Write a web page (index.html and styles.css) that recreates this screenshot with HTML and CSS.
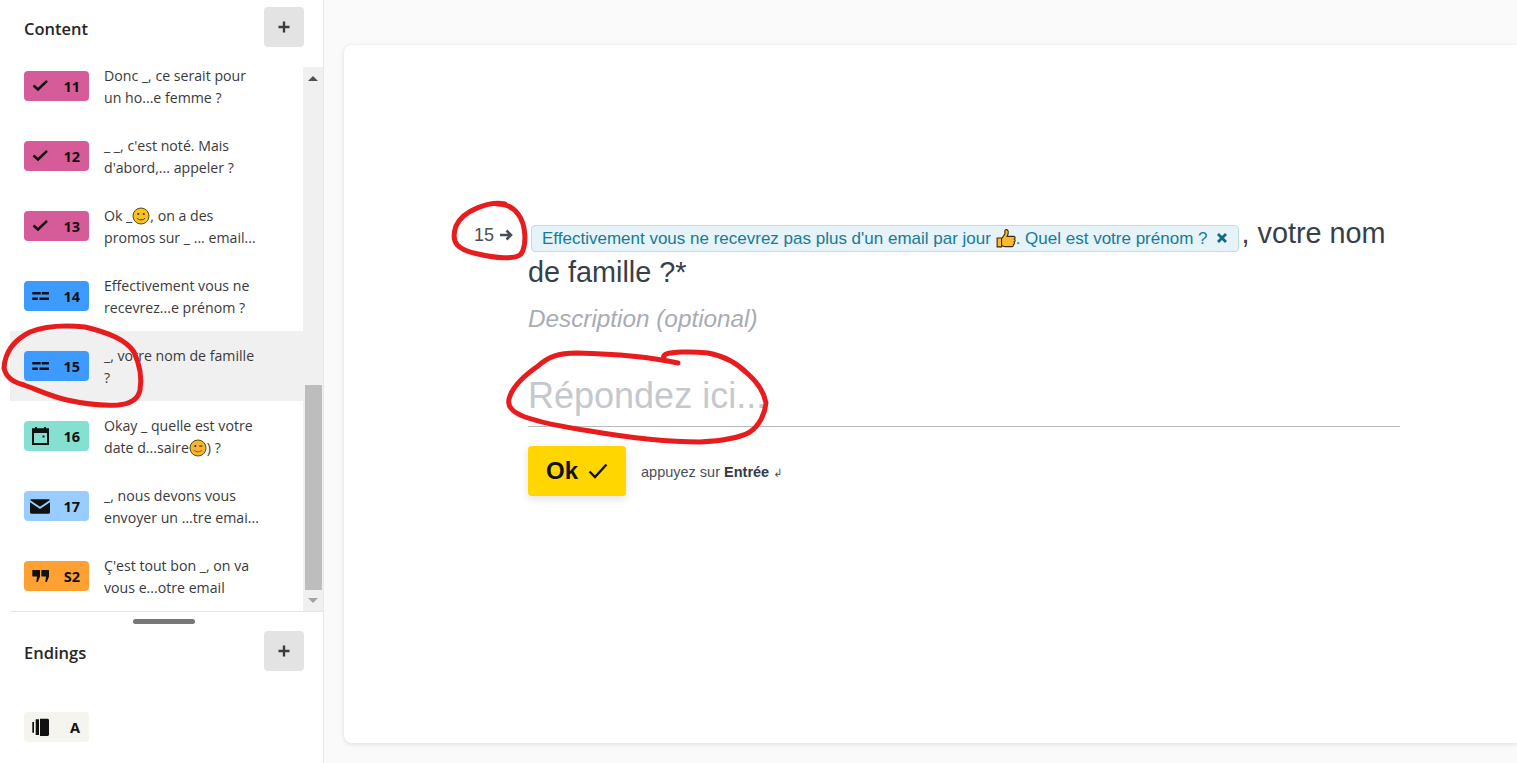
FILE: index.html

```html
<!DOCTYPE html>
<html lang="en">
<head>
    <meta charset="UTF-8">
    <meta name="viewport" content="width=device-width, initial-scale=1.0">
    <title>Form editor</title>
    <link rel="stylesheet" href="styles.css">
</head>
<body>
    <svg width="0" height="0" class="defs">
        <symbol id="i-check" viewBox="0 0 18 18"><path d="M1.500 8.500l4.500 4L15 3.800" fill="none" stroke="currentColor" stroke-width="2.500"/></symbol>
        <symbol id="i-short" viewBox="0 0 18 18"><path d="M.3 5h8.400v2.500H.3zM9.700 5H17v2.500H9.700zM.3 10.500h5.500V13H.3zM7.500 10.500H17V13H7.500z" fill="currentColor"/></symbol>
        <symbol id="i-date" viewBox="0 0 18 18"><path d="M1 2.500h15v14.500H1z" fill="none" stroke="currentColor" stroke-width="2"/><path d="M0 1.500h17V6H0zM3 -1h2v3H3zM12 -1h2v3h-2zM10.500 8.500h2v2h-2z" fill="currentColor"/></symbol>
        <symbol id="i-mail" viewBox="0 0 20 18"><path d="M1.500 2.300h17c.7 0 1.200.3 1.400.8L10 9.800.1 3.100c.2-.5.700-.8 1.400-.8zM0 5.200l10 6.800 10-6.800v10c0 .9-.6 1.500-1.500 1.500h-17c-.9 0-1.500-.6-1.500-1.500z" fill="currentColor"/></symbol>
        <symbol id="i-quote" viewBox="0 0 18 18"><path d="M.3 3.500c0-.3.200-.5.500-.5h6.700c.3 0 .5.200.5.500v6L5.800 15H4.300l.7-5.500H.8c-.3 0-.5-.2-.5-.5zM9.300 3.500c0-.3.200-.5.500-.5h6.700c.3 0 .5.200.5.500v6L14.800 15h-1.500l.7-5.500H9.800c-.3 0-.5-.2-.5-.5z" fill="currentColor"/></symbol>
        <symbol id="i-end" viewBox="0 0 18 18"><path d="M.3 4H2v10.700H.3zM3.700 1.300H7V17H3.700zM8 .7h7.500c.9 0 1.500.6 1.500 1.500v14.300c0 .9-.6 1.500-1.500 1.500H8z" fill="currentColor"/></symbol>
        <symbol id="i-smile" viewBox="0 0 18 18"><circle cx="9" cy="9" r="8" fill="#fcc21b" stroke="#5a4a1a" stroke-width="1"/><circle cx="6.300" cy="7" r="1.100" fill="#333"/><circle cx="11.700" cy="7" r="1.100" fill="#333"/><path d="M5 11c1.500 2.500 6.500 2.500 8 0" fill="none" stroke="#333" stroke-width="1"/></symbol>
        <symbol id="i-wink" viewBox="0 0 18 18"><circle cx="9" cy="9" r="8" fill="#f5b52e" stroke="#5a4a1a" stroke-width="1"/><circle cx="6.300" cy="7" r="1.100" fill="#333"/><path d="M10.300 7h3" stroke="#333" stroke-width="1.200"/><path d="M5 11c1.500 2.500 6.500 2.500 8 0" fill="none" stroke="#d9483b" stroke-width="1.200"/></symbol>
        <symbol id="i-plus" viewBox="0 0 12 12"><path d="M6 .5v11M.5 6h11" stroke="currentColor" stroke-width="2.400"/></symbol>
    </svg>

    <div class="page">
        <aside class="sidebar">
            <div class="side-head">
                <h2>Content</h2>
                <button class="add-btn"><svg class="plus"><use href="#i-plus"/></svg></button>
            </div>
            <div class="list-wrap">
                <div class="rows">
                    <div class="row first">
                        <span class="badge pink"><svg class="b-icon"><use href="#i-check"/></svg><b>11</b></span>
                        <p>Donc _, ce serait pour<br>un ho...e femme ?</p>
                    </div>
                    <div class="row">
                        <span class="badge pink"><svg class="b-icon"><use href="#i-check"/></svg><b>12</b></span>
                        <p>_ _, c'est noté. Mais<br>d'abord,... appeler ?</p>
                    </div>
                    <div class="row">
                        <span class="badge pink"><svg class="b-icon"><use href="#i-check"/></svg><b>13</b></span>
                        <p>Ok _<svg class="emoji"><use href="#i-smile"/></svg>, on a des<br>promos sur _ ... email...</p>
                    </div>
                    <div class="row">
                        <span class="badge blue"><svg class="b-icon"><use href="#i-short"/></svg><b>14</b></span>
                        <p>Effectivement vous ne<br>recevrez...e prénom ?</p>
                    </div>
                    <div class="row active">
                        <span class="badge blue"><svg class="b-icon"><use href="#i-short"/></svg><b>15</b></span>
                        <p>_, votre nom de famille<br>?</p>
                    </div>
                    <div class="row">
                        <span class="badge teal"><svg class="b-icon"><use href="#i-date"/></svg><b>16</b></span>
                        <p>Okay _ quelle est votre<br>date d...saire<svg class="emoji"><use href="#i-wink"/></svg>) ?</p>
                    </div>
                    <div class="row">
                        <span class="badge sky"><svg class="b-icon wide"><use href="#i-mail"/></svg><b>17</b></span>
                        <p>_, nous devons vous<br>envoyer un ...tre emai...</p>
                    </div>
                    <div class="row">
                        <span class="badge orange"><svg class="b-icon"><use href="#i-quote"/></svg><b>S2</b></span>
                        <p>Ç'est tout bon _, on va<br>vous e...otre email</p>
                    </div>
                </div>
                <div class="scrollbar">
                    <div class="arrow-box up"><span class="arrow-up"></span></div>
                    <div class="thumb"></div>
                    <div class="arrow-box"><span class="arrow-down"></span></div>
                </div>
            </div>
            <div class="endings">
                <div class="handle"></div>
                <div class="side-head endings-head">
                    <h2>Endings</h2>
                    <button class="add-btn"><svg class="plus"><use href="#i-plus"/></svg></button>
                </div>
                <span class="badge beige"><svg class="b-icon"><use href="#i-end"/></svg><b>A</b></span>
            </div>
        </aside>

        <main class="main">
            <section class="card">
                <div class="question">
                    <div class="q-num">15
                        <svg class="q-arrow" viewBox="0 0 14 12"><path d="M1 6h11M7.500 1.500L12 6l-4.500 4.500" fill="none" stroke="currentColor" stroke-width="2.600"/></svg>
                    </div>
                    <div class="q-body">
                        <h1><span class="tag">Effectivement vous ne recevrez pas plus d'un email par jour <svg class="emoji thumb-up" viewBox="0 0 18 18"><path d="M1 9h4v8H1zM5 9.500l3-4V2.500c0-1.500 2.500-1.500 3 .5 .3 1.500-.3 3-1 4.500h6c1.500 0 1.500 2 .5 2.500 1 .5 1 2-.2 2.500 .7 .7.5 2-.6 2.300 .3 1-.4 2-1.500 2H8l-3-1z" fill="#fdb92e" stroke="#3a2c10" stroke-width="1"/></svg>. Quel est votre prénom ?<svg class="tag-x" viewBox="0 0 12 12"><path d="M2 2l8 8M10 2l-8 8" stroke="currentColor" stroke-width="2.800"/></svg></span>, votre nom de famille ?*</h1>
                        <div class="desc">Description (optional)</div>
                        <div class="answer">Répondez ici...</div>
                        <div class="actions">
                            <button class="ok-btn">Ok <svg class="ok-check" viewBox="0 0 20 18"><path d="M1.500 9.500L7 15 18.500 2.500" fill="none" stroke="currentColor" stroke-width="2.400"/></svg></button>
                            <span class="hint">appuyez sur <b>Entrée</b> <span class="enter">↲</span></span>
                        </div>
                    </div>
                </div>
            </section>
        </main>
    </div>

    <!-- pen marks drawn on top of the screenshot -->
    <svg class="marks" viewBox="0 0 1517 763">
        <path d="M505 204C490 201 463 210 456 226C450 243 458 250 478 254C495 258 515 260 521 254C527 245 526 224 518 214C513 207 505 204 497 204"/>
        <path d="M85 327C65 325 45 326 30 332C14 340 5 352 4 368C6 378 14 382 24 385C38 390 50 396 67 400C85 404 100 406 118 405C130 404 138 400 140 390C142 378 140 365 134 352C126 340 110 333 85 327"/>
        <path d="M678 363C655 358 620 354 577 353C558 353 548 357 538 366C525 375 512 387 509 399C507 408 514 413 525 417C545 424 570 428 590 431C625 437 665 442 700 442C720 441 738 439 750 432C760 425 765 413 766 403C764 392 757 382 748 374C738 364 725 356 708 353C690 351 672 352 666 354C664 355 663 357 664 357"/>
    </svg>
</body>
</html>
```

FILE: styles.css

```css
* {
    box-sizing: border-box;
}
body {
    margin: 0;
    background-color: #fafafa;
    font-family: "Open Sans", sans-serif;
    color: #262627;
    overflow: hidden;
}
.defs {
    position: absolute;
}
.page {
    display: flex;
    height: 763px;
}
.sidebar {
    width: 324px;
    flex-shrink: 0;
    background-color: white;
    border-right: 1px solid #e8e8e8;
}
.side-head {
    display: flex;
    justify-content: space-between;
    height: 67px;
    padding: 7px 19px 0 24px;
}
.side-head h2 {
    margin: 0;
    padding-top: 10px;
    font-size: 16.5px;
    line-height: 24px;
    font-weight: 600;
}
.add-btn {
    display: flex;
    align-items: center;
    justify-content: center;
    width: 40px;
    height: 40px;
    border: none;
    border-radius: 4px;
    background-color: #e3e3e3;
    color: #3c3c3c;
    padding: 0;
}
.plus {
    width: 12px;
    height: 12px;
}
.list-wrap {
    display: flex;
    height: 544px;
    padding-left: 10px;
}
.rows {
    width: 293px;
    overflow: hidden;
}
.row {
    display: flex;
    height: 70px;
    padding: 14px 0 0 14px;
    flex-shrink: 0;
}
.row.first {
    margin-top: -16px;
}
.row.active {
    background-color: #f0f0f0;
}
.row p {
    margin: 0 0 0 15px;
    font-size: 14.15px;
    line-height: 22px;
    white-space: nowrap;
    color: #3a3a3c;
}
.badge {
    display: flex;
    align-items: center;
    justify-content: space-between;
    width: 65px;
    height: 30px;
    margin-top: 6px;
    padding: 0 9px 0 8px;
    border-radius: 4px;
    font-size: 14.5px;
    flex-shrink: 0;
    color: #111;
}
.badge b {
    font-weight: 700;
}
.b-icon {
    width: 18px;
    height: 18px;
    overflow: visible;
}
.b-icon.wide {
    width: 20px;
    margin-left: -2px;
}
.pink { background-color: #d65c99; }
.blue { background-color: #3d9bff; }
.teal { background-color: #85e0d1; }
.sky { background-color: #99ccff; }
.orange { background-color: #ffa033; }
.beige { background-color: #f5f4ef; }
.emoji {
    width: 18px;
    height: 18px;
    vertical-align: -4px;
}
.scrollbar {
    display: flex;
    flex-direction: column;
    width: 20px;
    background-color: #f0f0f0;
}
.arrow-box {
    display: flex;
    justify-content: center;
    align-items: center;
    height: 21px;
}
.arrow-box.up {
    height: 22px;
    margin-bottom: 296px;
}
.arrow-up {
    border-left: 5px solid transparent;
    border-right: 5px solid transparent;
    border-bottom: 5px solid #505050;
}
.arrow-down {
    border-left: 5px solid transparent;
    border-right: 5px solid transparent;
    border-top: 5px solid #a3a3a3;
}
.thumb {
    height: 205px;
    margin: 0 1px 0 2px;
    background-color: #bdbdbd;
}
.endings {
    margin-left: 10px;
    border-top: 1px solid #e6e6e6;
}
.handle {
    width: 62px;
    height: 5px;
    margin: 7px 0 0 123px;
    border-radius: 3px;
    background-color: #777;
}
.endings-head {
    height: 88px;
    padding: 7px 19px 0 14px;
}
.endings .badge {
    margin: 0 0 0 14px;
}
.main {
    flex: 1;
    min-width: 0;
    padding: 45px 0 20px 20px;
}
.card {
    height: 698px;
    background-color: white;
    border-radius: 8px 0 0 8px;
    box-shadow: 0 1px 5px rgba(0, 0, 0, 0.12);
    font-family: "Liberation Sans", sans-serif;
}
.question {
    display: flex;
    padding: 169px 0 0 130px;
}
.q-num {
    width: 54px;
    flex-shrink: 0;
    padding-top: 9px;
    font-size: 18px;
    line-height: 24px;
    color: #4a4f57;
}
.q-arrow {
    width: 14px;
    height: 12px;
}
.q-body {
    width: 872px;
}
.q-body h1 {
    margin: 0;
    font-size: 28.8px;
    line-height: 39px;
    font-weight: normal;
    color: #37404a;
}
.tag {
    display: inline-block;
    height: 27px;
    margin: 0 3px;
    padding: 0 10px;
    border: 1px solid #bcdde9;
    border-radius: 4px;
    background-color: #e6f3f8;
    color: #1a7a96;
    font-size: 17px;
    line-height: 25px;
    vertical-align: -1px;
}
.thumb-up {
    width: 20px;
    height: 20px;
}
.tag-x {
    width: 12px;
    height: 12px;
    margin-left: 8px;
    color: #0f6a8a;
}
.desc {
    margin-top: 10px;
    font-size: 24.3px;
    line-height: 34px;
    font-style: italic;
    color: #a8acb2;
}
.answer {
    height: 65px;
    margin-top: 26px;
    padding-top: 11px;
    border-bottom: 1px solid #bbbbbb;
    font-size: 36px;
    line-height: 46px;
    color: #c5c8cc;
}
.actions {
    display: flex;
    align-items: center;
    margin-top: 19px;
}
.ok-btn {
    display: flex;
    align-items: center;
    justify-content: center;
    width: 98px;
    height: 50px;
    border: none;
    border-radius: 4px;
    background-color: #ffd600;
    box-shadow: 0 3px 10px rgba(0, 0, 0, 0.12);
    color: #111;
    font-family: "Liberation Sans", sans-serif;
    font-size: 24px;
    font-weight: bold;
    padding: 0;
}
.ok-check {
    width: 20px;
    height: 18px;
    margin-left: 10px;
}
.hint {
    margin-left: 15px;
    padding-top: 2px;
    font-size: 14.5px;
    color: #4a4f57;
}
.hint b {
    color: #333b46;
}
.enter {
    font-family: "DejaVu Sans", sans-serif;
    font-size: 11px;
}
.marks {
    position: absolute;
    left: 0;
    top: 0;
    width: 1517px;
    height: 763px;
    pointer-events: none;
}
.marks path {
    fill: none;
    stroke: #e81c1c;
    stroke-width: 5;
    stroke-linecap: round;
}
```
